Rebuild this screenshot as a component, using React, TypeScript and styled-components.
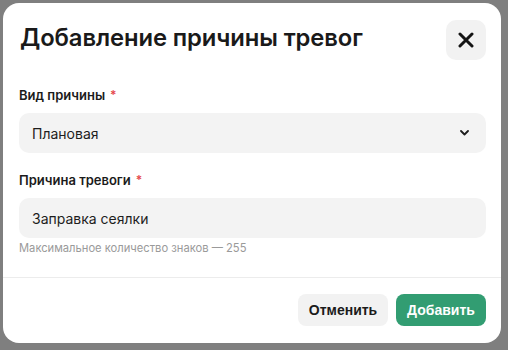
import React, { useState } from "react";
import styled, { createGlobalStyle } from "styled-components";

const GlobalStyle = createGlobalStyle`
  html, body {
    margin: 0;
    padding: 0;
    background: #7f7f7f;
  }
  body {
    font-family: Inter, "Noto Sans", "Liberation Sans", sans-serif;
    color: #1b1b1b;
  }
  * {
    box-sizing: border-box;
  }
`;

const Backdrop = styled.div`
  width: 508px;
  height: 350px;
  padding: 3px 7px 7px 3px;
  background: #7f7f7f;
`;

const Modal = styled.div`
  width: 498px;
  height: 340px;
  background: #ffffff;
  border-radius: 16px;
  display: flex;
  flex-direction: column;
`;

const Header = styled.div`
  display: flex;
  align-items: center;
  justify-content: space-between;
  padding: 17px 15px 0 17px;
`;

const Title = styled.h1`
  margin: 0 0 5px;
  font-size: 23.8px;
  line-height: 28px;
  font-weight: 600;
  letter-spacing: -0.1px;
  color: #1a1a1a;
`;

const CloseButton = styled.button`
  width: 40px;
  height: 40px;
  border: none;
  border-radius: 10px;
  background: #f2f2f2;
  display: flex;
  align-items: center;
  justify-content: center;
  padding: 0;
  cursor: pointer;
`;

const Body = styled.div`
  padding: 27px 15px 0 16px;
  display: flex;
  flex-direction: column;
`;

const Field = styled.div<{ $gap?: number }>`
  display: flex;
  flex-direction: column;
  margin-top: ${(p) => p.$gap ?? 0}px;
`;

const Label = styled.label`
  font-size: 13px;
  line-height: 16px;
  font-weight: 600;
  color: #1b1b1b;
  margin-bottom: 9px;
`;

const Required = styled.span`
  color: #e5484d;
  margin-left: 5px;
  font-size: 12px;
  position: relative;
  top: -1px;
`;

const Control = styled.div`
  height: 40px;
  border-radius: 10px;
  background: #f3f3f3;
  display: flex;
  align-items: center;
  justify-content: space-between;
  padding: 0 17px 0 13px;
  font-size: 14px;
  color: #1d1d1d;
`;

const TextInput = styled.input`
  height: 40px;
  width: 100%;
  border: none;
  outline: none;
  border-radius: 10px;
  background: #f3f3f3;
  padding: 0 13px;
  font-family: inherit;
  font-size: 14px;
  color: #1d1d1d;
`;

const Hint = styled.div`
  margin-top: 3px;
  font-size: 11.2px;
  line-height: 14px;
  color: #9a9a9a;
`;

const Divider = styled.div`
  height: 1px;
  background: #ececec;
  margin-top: 22px;
`;

const Footer = styled.div`
  display: flex;
  justify-content: flex-end;
  gap: 8px;
  padding: 16px 15px 0 0;
`;

const Button = styled.button<{ $primary?: boolean }>`
  height: 32px;
  width: 90px;
  border: none;
  border-radius: 8px;
  font-family: "Liberation Sans", Arial, sans-serif;
  font-weight: 700;
  font-size: 14px;
  cursor: pointer;
  background: ${(p) => (p.$primary ? "#329d72" : "#f2f2f2")};
  color: ${(p) => (p.$primary ? "#ffffff" : "#1b1b1b")};
`;

export default function App() {
  const [reason, setReason] = useState("Заправка сеялки");

  return (
    <>
      <GlobalStyle />
      <Backdrop>
        <Modal>
          <Header>
            <Title>Добавление причины тревог</Title>
            <CloseButton aria-label="Закрыть">
              <svg width="16" height="16" viewBox="0 0 16 16">
                <path d="M2 2L14 14M14 2L2 14" stroke="#141414" strokeWidth="3" strokeLinecap="round" />
              </svg>
            </CloseButton>
          </Header>
          <Body>
            <Field>
              <Label>
                Вид причины<Required>*</Required>
              </Label>
              <Control>
                <span>Плановая</span>
                <svg width="9" height="6" viewBox="0 0 9 6">
                  <path d="M1 1L4.5 4.5L8 1" stroke="#1d1d1d" strokeWidth="1.8" fill="none" strokeLinecap="round" strokeLinejoin="round" />
                </svg>
              </Control>
            </Field>
            <Field $gap={19}>
              <Label>
                Причина тревоги<Required>*</Required>
              </Label>
              <TextInput value={reason} onChange={(e) => setReason(e.target.value)} />
              <Hint>Максимальное количество знаков — 255</Hint>
            </Field>
          </Body>
          <Divider />
          <Footer>
            <Button>Отменить</Button>
            <Button $primary>Добавить</Button>
          </Footer>
        </Modal>
      </Backdrop>
    </>
  );
}
